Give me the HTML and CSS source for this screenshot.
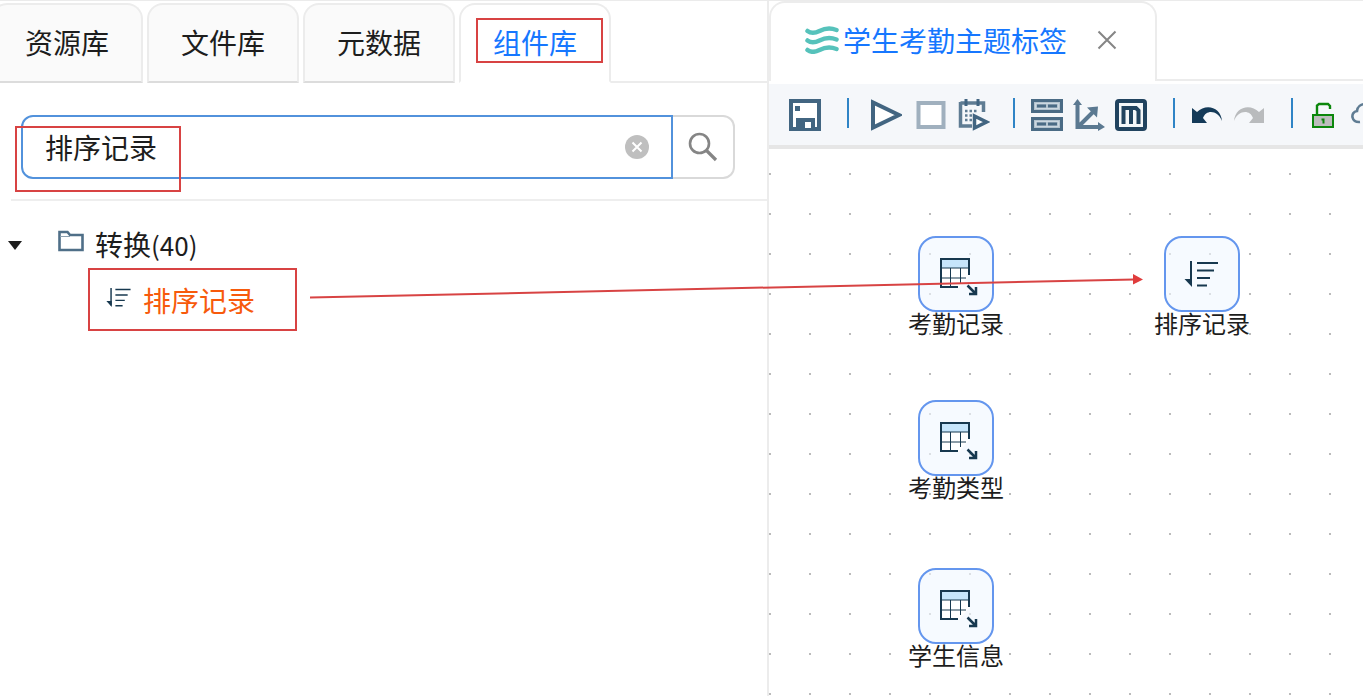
FILE: index.html
```html
<!DOCTYPE html>
<html lang="zh-CN">
<head>
    <meta charset="UTF-8">
    <meta name="viewport" content="width=device-width, initial-scale=1.0">
    <title>学生考勤主题标签</title>
    <link rel="stylesheet" href="styles.css">
</head>
<body>
    <svg class="symbols" aria-hidden="true">
        <symbol id="sort" viewBox="20 23 36 28">
            <path d="M27 24v24M33 26h21M33 33.500h17M33 41h13M33 48.500h10" fill="none" stroke="#17384f" stroke-width="2"/>
            <path d="M20.500 42h7.500v8z" fill="#17384f"/>
        </symbol>
        <symbol id="table" viewBox="16 16 44 44">
            <path d="M22 22h30v17l-11 13H22z" fill="#fff"/>
            <path d="M23 23h28v9H23z" fill="#c6e5fb"/>
            <path d="M51 39V23H23v28h17" fill="none" stroke="#17384f" stroke-width="2"/>
            <path d="M23 32h28M32.500 32v19M42.500 32v15M23 42h25" fill="none" stroke="#17384f"/>
            <path d="M49.500 49.500l8 8M58 51v7h-7" fill="none" stroke="#17384f" stroke-width="2.500"/>
        </symbol>
    </svg>

    <div class="app">
        <aside class="side">
            <nav class="tabs">
                <button class="tab">资源库</button>
                <button class="tab">文件库</button>
                <button class="tab">元数据</button>
                <button class="tab active">组件库</button>
                <span class="rest"></span>
            </nav>
            <div class="search">
                <div class="field">
                    <input type="text" value="排序记录" aria-label="搜索组件">
                    <button class="clear" aria-label="清空">
                        <svg width="24" height="24" viewBox="0 0 24 24"><circle cx="12" cy="12" r="12" fill="#bfbfbf"/><path d="M7.500 7.500l9 9M16.500 7.500l-9 9" stroke="#fff" stroke-width="2"/></svg>
                    </button>
                </div>
                <button class="go" aria-label="搜索">
                    <svg width="30" height="30" viewBox="0 0 30 30" fill="none" stroke="#858585"><circle cx="11.500" cy="11.500" r="9.500" stroke-width="2.600"/><path d="M18 18l10 10" stroke-width="3.200"/></svg>
                </button>
            </div>
            <ul class="tree">
                <li class="row">
                    <svg class="caret" width="14" height="9" viewBox="0 0 14 9"><path d="M0 0h14L7 9z" fill="#1d1d1d"/></svg>
                    <svg class="folder" width="26" height="22" viewBox="0 0 26 22"><path d="M1.500 20V2h8l2.500 3h12.500v15z" fill="#fff" stroke="#4f6f88" stroke-width="2.600"/><path d="M2 6.500h10" stroke="#8ca0b0"/></svg>
                    <span>转换<span class="count">(40)</span></span>
                </li>
                <li class="row leaf">
                    <svg class="sort" width="26" height="21"><use href="#sort"/></svg>
                    <span>排序记录</span>
                </li>
            </ul>
        </aside>

        <main class="work">
            <div class="files">
                <div class="file">
                    <svg width="34" height="28" viewBox="0 0 34 28" fill="none" stroke="#56c2bb" stroke-width="4.500" stroke-linecap="round"><path d="M2.500 5c4 3 8 2 12 0s9-4 17-1M2.500 14.500c4 3 8 2 12 0s9-4 17-1M2.500 24c4 3 8 2 12 0s9-4 17-1"/></svg>
                    <span>学生考勤主题标签</span>
                    <button class="close" aria-label="关闭">
                        <svg width="20" height="20" viewBox="0 0 20 20"><path d="M1.500 1.500l17 17M18.500 1.500l-17 17" stroke="#858585" stroke-width="2"/></svg>
                    </button>
                </div>
                <span class="rest"></span>
            </div>

            <div class="toolbar">
                <button class="tool" aria-label="保存">
                    <svg viewBox="0 0 32 32"><path d="M2 2h28v28H2z" fill="#fff" stroke="#426581" stroke-width="4"/><path d="M6 7h5v5H6z" fill="#426581"/><path d="M7 19h19v11H7z" fill="#426581"/><path d="M16 23h6v6h-6z" fill="#fff"/></svg>
                </button>
                <span class="sep"></span>
                <div class="group run">
                    <button class="tool" aria-label="运行">
                        <svg viewBox="0 0 32 32"><path d="M3 3.500v25L29 16z" fill="#fff" stroke="#426581" stroke-width="4"/></svg>
                    </button>
                    <button class="tool" aria-label="停止">
                        <svg viewBox="0 0 32 32"><path d="M4.500 4h25v24h-25z" fill="#fff" stroke="#a0b0be" stroke-width="4"/></svg>
                    </button>
                    <button class="tool" aria-label="定时运行">
                        <svg viewBox="0 0 32 32"><path d="M2.500 4h23v9M2.500 3v24H14" fill="none" stroke="#5f7c93" stroke-width="3.500"/><path d="M8 0v7M20 0v7" stroke="#426581" stroke-width="3"/><path d="M7 12h12M7 16.500h9M7 21h7" stroke="#5f7c93" stroke-width="2.500" stroke-dasharray="2.500 2"/><path d="M16.500 17v12l12-6z" fill="#fff" stroke="#426581" stroke-width="3.500"/></svg>
                    </button>
                </div>
                <span class="sep near"></span>
                <div class="group">
                    <button class="tool" aria-label="布局">
                        <svg viewBox="0 0 32 32"><path d="M1.500 1.500h29v11h-29zM1.500 19.500h29v11h-29z" fill="#b3c3cf" stroke="#4a6b85" stroke-width="3"/><path d="M4.500 4.500h23v5h-23zM4.500 22.500h23v5h-23z" fill="none" stroke="#ccd8e1"/><path d="M6 7h9M17 7h9M6 25h9M17 25h9" stroke="#4a6b85" stroke-width="3"/></svg>
                    </button>
                    <button class="tool" aria-label="坐标">
                        <svg viewBox="0 0 32 32"><path d="M4.500 4v24H28M5 28L22 11" fill="none" stroke="#5b7991" stroke-width="4"/><path d="M0 6l4.500-6L9 6zM25 23l7 5-7 4zM14 8.500l11-1-1 11z" fill="#5b7991"/></svg>
                    </button>
                    <button class="tool" aria-label="映射">
                        <svg viewBox="0 0 32 32"><rect x="2" y="2" width="28" height="28" rx="2" fill="#f4f7f9" stroke="#21435f" stroke-width="4"/><path d="M8.500 25V9h12.500l2.500 2.500V25M16 9v16" fill="none" stroke="#21435f" stroke-width="4"/></svg>
                    </button>
                </div>
                <span class="sep"></span>
                <div class="group">
                    <button class="tool" aria-label="撤销">
                        <svg viewBox="0 0 32 32"><path d="M1 9l5 4C15 4 30 8 31 22 27 11 15 10 12 19l4 5H1z" fill="#143a58"/></svg>
                    </button>
                    <button class="tool" aria-label="重做">
                        <svg viewBox="0 0 32 32"><path d="M31 9l-5 4C17 4 2 8 1 22 5 11 17 10 20 19l-4 5h15z" fill="#b9bbbd"/></svg>
                    </button>
                </div>
                <span class="sep"></span>
                <div class="group last">
                    <button class="tool" aria-label="锁定">
                        <svg viewBox="0 0 32 32"><path d="M6 16h20v12H6z" fill="#bdbdbd" stroke="#0c870c" stroke-width="2"/><path d="M10 15V6.500L12 5h9l2 2v3" fill="none" stroke="#0c870c" stroke-width="2.400"/><path d="M14.500 20.500H16.500V24.500" fill="none" stroke="#0c870c" stroke-width="2"/></svg>
                    </button>
                    <button class="tool" aria-label="云端">
                        <svg viewBox="0 0 32 32"><path d="M9 23C0 24-1 13 6 12 7 3 20 3 22 11c9 0 10 12 1 12" fill="none" stroke="#5f7c93" stroke-width="2.600"/></svg>
                    </button>
                </div>
            </div>

            <div class="canvas">
                <div class="node attendance">
                    <div class="box"><svg width="44" height="44"><use href="#table"/></svg></div>
                    <span>考勤记录</span>
                </div>
                <div class="node type">
                    <div class="box"><svg width="44" height="44"><use href="#table"/></svg></div>
                    <span>考勤类型</span>
                </div>
                <div class="node student">
                    <div class="box"><svg width="44" height="44"><use href="#table"/></svg></div>
                    <span>学生信息</span>
                </div>
                <div class="node order">
                    <div class="box"><svg width="36" height="28"><use href="#sort"/></svg></div>
                    <span>排序记录</span>
                </div>
            </div>
        </main>
    </div>

    <!-- red guide marks over the page -->
    <svg class="marks" aria-hidden="true">
        <g fill="none" stroke="#d84343" stroke-width="2">
            <rect x="477" y="19" width="125" height="43"/>
            <rect x="16" y="127" width="164" height="64"/>
            <rect x="89" y="269" width="207" height="61"/>
            <path d="M310 297.500L1134 279.500"/>
        </g>
        <path d="M1133 274l10 5.500-10 5z" fill="#e03c3c"/>
    </svg>
</body>
</html>
```

FILE: styles.css
```css
*{
    margin: 0;
    padding: 0;
    box-sizing: border-box;
}
body{
    font-family: "Noto Sans CJK SC", sans-serif;
    font-size: 28px;
    color: #1d1d1d;
    background-color: white;
    overflow: hidden;
}
button{
    font: inherit;
    color: inherit;
    background: none;
    border: none;
    cursor: pointer;
}
svg{
    display: block;
    flex-shrink: 0;
}
.symbols{
    position: absolute;
    width: 0;
    height: 0;
}
.app{
    display: grid;
    grid-template-columns: 769fr 594fr;
    min-height: 100vh;
    border-top: 1px solid #ebebeb;
}

/* left panel */
.side{
    min-width: 0;
    border-right: 2px solid #ececec;
}
.tabs{
    display: flex;
    gap: 4px;
    padding-top: 2px;
    margin-left: -9px;
}
.tab{
    width: 152px;
    height: 80px;
    padding-bottom: 2px;
    background-color: #fafafa;
    border: 2px solid #ececec;
    border-bottom-color: #dcdcdc;
    border-radius: 16px 16px 0 0;
}
.tab.active{
    color: #1677ff;
    background-color: white;
    border-bottom-color: white;
}
.rest{
    flex: 1;
    border-bottom: 2px solid #ececec;
}
.tabs .rest{
    margin-left: -4px;
}
.search{
    display: flex;
    margin-left: 11px;
    padding: 32px 32px 20px 10px;
    border-bottom: 2px solid #eeeeee;
}
.field{
    flex: 1;
    display: flex;
    align-items: center;
    height: 64px;
    padding: 0 22px;
    border: 2px solid #5292dc;
    border-radius: 12px 0 0 12px;
}
.field input{
    flex: 1;
    min-width: 0;
    height: 56px;
    font: inherit;
    color: inherit;
    background: none;
    border: none;
    outline: none;
}
.go{
    display: flex;
    justify-content: center;
    align-items: center;
    width: 62px;
    border: 2px solid #d9d9d9;
    border-left: none;
    border-radius: 0 12px 12px 0;
}
.tree{
    padding: 16px 8px;
    list-style: none;
}
.row{
    display: flex;
    align-items: center;
    height: 56px;
}
.row > span{
    padding-bottom: 2px;
}
.count{
    font-size: 26px;
}
.folder{
    margin: 0 11px 8px 36px;
}
.leaf{
    padding-left: 98px;
    color: #f75a0c;
}
.sort{
    margin: 0 11px 8px 0;
}

/* work area */
.work{
    display: flex;
    flex-direction: column;
    min-width: 0;
    overflow: hidden;
}
.files{
    display: flex;
    height: 80px;
    margin-bottom: 3px;
}
.file{
    display: flex;
    align-items: center;
    gap: 4px;
    padding: 0 38px 4px 34px;
    color: #1677ff;
    border: 2px solid #ececec;
    border-bottom: none;
    border-radius: 16px 16px 0 0;
}
.close{
    margin-left: 26px;
}
.toolbar{
    display: flex;
    align-items: center;
    height: 65px;
    padding-left: 20px;
    background-color: #f5f7fa;
    border-bottom: 4px solid #e6e6e6;
}
.tool{
    flex-shrink: 0;
    width: 32px;
    height: 32px;
}
.tool svg{
    width: 32px;
    height: 32px;
}
.group{
    display: flex;
    gap: 10px;
}
.run{
    gap: 12px;
    padding-left: 5px;
}
.sep{
    flex-shrink: 0;
    width: 2px;
    height: 30px;
    margin: 0 16px 4px 26px;
    background-color: #2f84c6;
}
.near{
    margin-left: 23px;
}
.last{
    gap: 12px;
    margin-left: -2px;
}
.canvas{
    position: relative;
    flex: 1;
    min-height: 547px;
    background-image: conic-gradient(from 270deg at 2px 2px, #bbbbbb 90deg, transparent 90deg);
    background-position: 0 24px;
    background-size: 40px 40px;
}
.node{
    position: absolute;
    display: flex;
    flex-direction: column;
    align-items: center;
    font-size: 24px;
    line-height: 22px;
}
.box{
    display: flex;
    justify-content: center;
    align-items: center;
    width: 76px;
    height: 76px;
    background-color: rgba(240, 246, 255, 0.6);
    border: 2px solid #6496ee;
    border-radius: 18px;
}
.attendance{
    left: 139px;
    top: 87px;
}
.type{
    left: 139px;
    top: 251px;
}
.student{
    left: 139px;
    top: 419px;
}
.order{
    left: 385px;
    top: 87px;
}

/* guide marks */
.marks{
    position: absolute;
    left: 0;
    top: 0;
    width: 100%;
    height: 100%;
    pointer-events: none;
}
```
